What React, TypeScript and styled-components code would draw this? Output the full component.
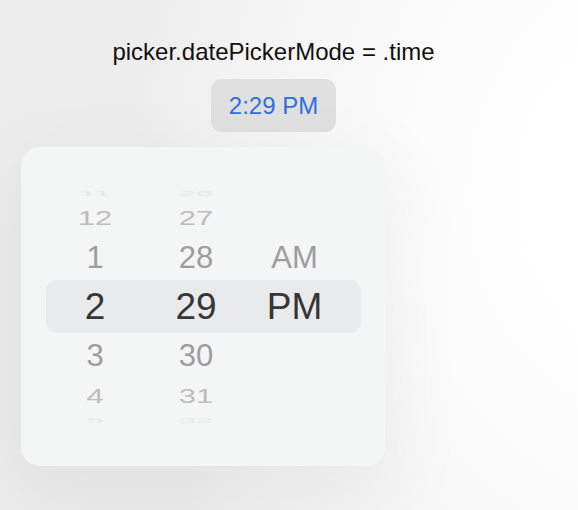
import * as React from 'react';
import styled, { createGlobalStyle } from 'styled-components';

const GlobalStyle = createGlobalStyle`
  html, body {
    margin: 0;
    padding: 0;
    height: 100%;
  }
  body {
    font-family: "Liberation Sans", Arial, sans-serif;
    background: radial-gradient(ellipse 520px 640px at 112% 38%, #ffffff 0%, #fcfcfc 45%, #f2f2f2 85%, #ededed 100%);
    background-color: #eeeeee;
    overflow: hidden;
  }
`;

const Page = styled.div`
  width: 547px;
  height: 510px;
  padding-top: 38px;
  box-sizing: border-box;
  display: flex;
  flex-direction: column;
  align-items: center;
`;

const Title = styled.div`
  font-size: 24px;
  line-height: 28px;
  color: #111111;
`;

const TimeButton = styled.div`
  margin-top: 13px;
  height: 53px;
  padding: 0 18px;
  box-sizing: border-box;
  display: flex;
  align-items: center;
  border-radius: 11px;
  background: #e0e0e0;
  color: #2f71dc;
  font-size: 24px;
  line-height: 1;
`;

const Card = styled.div`
  align-self: flex-start;
  margin: 15px 0 0 21px;
  width: 364px;
  height: 319px;
  box-sizing: border-box;
  padding: 39px 24px 0 25px;
  border-radius: 19px;
  background: #f4f5f5;
  box-shadow: 0 24px 70px 20px rgba(0, 0, 0, 0.045);
`;

const Wheel = styled.div`
  display: flex;
  flex-direction: column;
`;

const Row = styled.div<{ $h: number; $selected?: boolean }>`
  height: ${p => p.$h}px;
  display: grid;
  grid-template-columns: 98px 104px 93px;
  border-radius: 11px;
  background: ${p => (p.$selected ? '#e9eaeb' : 'transparent')};
`;

const Cell = styled.span<{ $h: number; $size: number; $color: string; $sy: number }>`
  display: block;
  height: ${p => p.$h}px;
  line-height: ${p => p.$h}px;
  text-align: center;
  font-size: ${p => p.$size}px;
  color: ${p => p.$color};
  transform: scaleY(${p => p.$sy});
`;

type RowDef = { h: number; size: number; color: string; sy: number; cells: string[]; selected?: boolean };

const rows: RowDef[] = [
  { h: 14, size: 31, color: '#e7e8e8', sy: 0.26, cells: ['11', '26', ''] },
  { h: 35, size: 31, color: '#bdbdbd', sy: 0.68, cells: ['12', '27', ''] },
  { h: 45, size: 31, color: '#9d9d9d', sy: 1, cells: ['1', '28', 'AM'] },
  { h: 53, size: 37, color: '#363636', sy: 1, cells: ['2', '29', 'PM'], selected: true },
  { h: 45, size: 31, color: '#9d9d9d', sy: 1, cells: ['3', '30', ''] },
  { h: 35, size: 31, color: '#bdbdbd', sy: 0.68, cells: ['4', '31', ''] },
  { h: 14, size: 31, color: '#e7e8e8', sy: 0.26, cells: ['5', '32', ''] },
];

export default function App() {
  return (
    <>
      <GlobalStyle />
      <Page>
        <Title>picker.datePickerMode = .time</Title>
        <TimeButton>2:29 PM</TimeButton>
        <Card>
          <Wheel>
            {rows.map((r, i) => (
              <Row key={i} $h={r.h} $selected={r.selected}>
                {r.cells.map((c, j) => (
                  <Cell key={j} $h={r.h} $size={r.size} $color={r.color} $sy={r.sy}>
                    {c}
                  </Cell>
                ))}
              </Row>
            ))}
          </Wheel>
        </Card>
      </Page>
    </>
  );
}
